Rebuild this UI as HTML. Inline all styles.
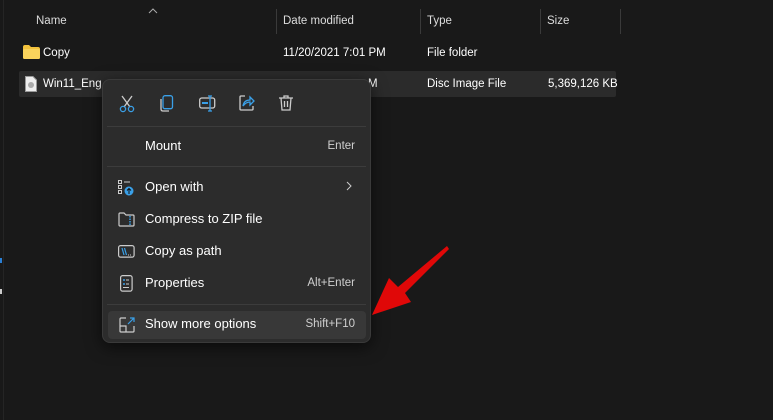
<!DOCTYPE html>
<html><head><meta charset="utf-8"><style>
*{margin:0;padding:0;box-sizing:border-box}
body{width:773px;height:420px;background:#191919;position:relative;overflow:hidden;font-family:"Segoe UI","Liberation Sans",sans-serif;color:#fff}
.t{position:absolute;font-size:11.5px;white-space:nowrap;transform:translateY(1px)}
.sep{position:absolute;top:9px;width:1px;height:25px;background:#3a3a3a}
.menu{position:absolute;left:102px;top:79px;width:269px;height:264px;background:#2c2c2c;border:1px solid #3a3a3a;border-radius:8px;box-shadow:0 4px 16px rgba(0,0,0,.6)}
.mi{position:absolute;left:42px;font-size:13px;color:#fff}
.sc{position:absolute;right:15px;font-size:11.5px;color:#d0d0d0}
.hl{position:absolute;height:1px;left:4px;right:4px;background:#3c3c3c}
svg{position:absolute;overflow:visible}
</style></head><body>
<div style="position:absolute;left:3px;top:0;width:1px;height:420px;background:#252525"></div>
<div style="position:absolute;left:0;top:258px;width:2px;height:5px;background:#2a7fd4"></div>
<div style="position:absolute;left:0;top:289px;width:2px;height:5px;background:#ccc"></div>
<div class="t" style="left:36px;top:14px;color:#ddd">Name</div>
<svg style="left:148px;top:8px" width="10" height="6"><path d="M1 5 L5 1 L9 5" stroke="#aaa" fill="none"/></svg>
<div class="sep" style="left:276px"></div>
<div class="t" style="left:283px;top:14px;color:#ddd">Date modified</div>
<div class="sep" style="left:420px"></div>
<div class="t" style="left:427px;top:14px;color:#ddd">Type</div>
<div class="sep" style="left:540px"></div>
<div class="t" style="left:547px;top:14px;color:#ddd">Size</div>
<div class="sep" style="left:620px"></div>
<svg style="left:23px;top:45px" width="17" height="14"><path d="M0 2 Q0 0 2 0 H6 L8 2 H15 Q17 2 17 4 V12 Q17 14 15 14 H2 Q0 14 0 12Z" fill="#f3c23c"/><rect x="0" y="4" width="17" height="10" rx="1.5" fill="#fad35c"/></svg>
<div class="t" style="left:43px;top:46px">Copy</div>
<div class="t" style="left:283px;top:46px">11/20/2021 7:01 PM</div>
<div class="t" style="left:427px;top:46px">File folder</div>
<div style="position:absolute;left:19px;top:71px;width:597px;height:26px;background:#2b2b2b;border-radius:2px"></div>
<svg style="left:25px;top:76px" width="12" height="16"><path d="M0.5 0.5 H8 L11.5 4 V15.5 H0.5Z" fill="#eee" stroke="#999"/><circle cx="6" cy="9" r="3" fill="#aaa"/></svg>
<div class="t" style="left:43px;top:77px">Win11_Eng</div>
<div class="t" style="left:368px;top:77px">M</div>
<div class="t" style="left:427px;top:77px">Disc Image File</div>
<div class="t" style="left:548px;top:77px">5,369,126 KB</div>
<div class="menu">
 <svg style="left:16px;top:15px" width="16" height="18"><path d="M3 1 L11 12 M13 1 L5 12" stroke="#ccc" stroke-width="1.3"/><circle cx="4" cy="14" r="2.6" stroke="#3aa0e8" fill="none" stroke-width="1.3"/><circle cx="12" cy="14" r="2.6" stroke="#3aa0e8" fill="none" stroke-width="1.3"/></svg>
 <svg style="left:57px;top:15px" width="14" height="17"><rect x="3" y="0.7" width="9.5" height="13" rx="2" stroke="#3aa0e8" fill="none" stroke-width="1.3"/><path d="M1 4 V14 Q1 16 3 16 H9" stroke="#ccc" fill="none" stroke-width="1.3"/></svg>
 <svg style="left:96px;top:15px" width="17" height="17"><rect x="0.7" y="3" width="15" height="10" rx="2" stroke="#ccc" fill="none" stroke-width="1.3"/><rect x="3" y="7" width="6" height="2" fill="#3aa0e8"/><path d="M11 1 V16 M9 1 H13 M9 16 H13" stroke="#3aa0e8" stroke-width="1.3"/></svg>
 <svg style="left:136px;top:15px" width="16" height="16"><path d="M6 1 H2 Q1 1 1 2 V14 Q1 15 2 15 H13 Q14 15 14 14 V11" stroke="#ccc" fill="none" stroke-width="1.3"/><path d="M4 11 Q5 5 11 5 V2 L15 6 L11 10 V7 Q7 7 4 11Z" stroke="#3aa0e8" fill="none" stroke-width="1.3"/></svg>
 <svg style="left:176px;top:15px" width="14" height="16"><path d="M0 3 H14 M5 3 V1 H9 V3 M2 3 L3 15 H11 L12 3 M5.5 6 V12 M8.5 6 V12" stroke="#ccc" fill="none" stroke-width="1.3"/></svg>
 <div class="hl" style="top:46px"></div>
 <div class="mi" style="top:58px">Mount</div><div class="sc" style="top:60px">Enter</div>
 <div class="hl" style="top:86px"></div>
 <svg style="left:15px;top:100px" width="16" height="16"><rect x="0.5" y="0.5" width="3" height="3" stroke="#ccc" fill="none"/><rect x="0.5" y="5.5" width="3" height="3" stroke="#ccc" fill="none"/><rect x="0.5" y="10.5" width="3" height="3" stroke="#ccc" fill="none"/><path d="M6 2 H12" stroke="#ccc"/><circle cx="11" cy="11" r="4.5" fill="#3aa0e8"/><path d="M11 14 V9 M9 10.5 L11 8.5 L13 10.5" stroke="#111" fill="none"/></svg>
 <div class="mi" style="top:99px">Open with</div>
 <svg style="left:243px;top:101px" width="6" height="10"><path d="M1 1 L5 5 L1 9" stroke="#ccc" fill="none"/></svg>
 <svg style="left:15px;top:132px" width="17" height="15"><path d="M1 2 Q1 1 2 1 H6 L8 3 H15 Q16 3 16 4 V13 Q16 14 15 14 H2 Q1 14 1 13Z" stroke="#ccc" fill="none" stroke-width="1.2"/><path d="M12 4 V13" stroke="#3aa0e8" stroke-width="1.5" stroke-dasharray="1.5 1"/></svg>
 <div class="mi" style="top:131px">Compress to ZIP file</div>
 <svg style="left:15px;top:165px" width="17" height="13"><rect x="0.6" y="0.6" width="15.5" height="11.5" rx="2" stroke="#ccc" fill="none" stroke-width="1.2"/><path d="M4 3 L6 10 M6.5 3 L8.5 10" stroke="#3aa0e8" stroke-width="1.2"/><path d="M10 10 H14" stroke="#ccc" stroke-dasharray="1 1"/></svg>
 <div class="mi" style="top:163px">Copy as path</div>
 <svg style="left:17px;top:195px" width="13" height="17"><rect x="0.6" y="0.6" width="11.5" height="15.5" rx="2" stroke="#ccc" fill="none" stroke-width="1.2"/><circle cx="4" cy="5" r="1" fill="#3aa0e8"/><circle cx="4" cy="9" r="1" fill="#3aa0e8"/><path d="M6 5 H9 M6 9 H9 M3 12.5 H9" stroke="#ccc"/></svg>
 <div class="mi" style="top:195px">Properties</div><div class="sc" style="top:197px">Alt+Enter</div>
 <div class="hl" style="top:224px"></div>
 <div style="position:absolute;left:5px;top:231px;width:258px;height:28px;background:#383838;border-radius:4px"></div>
 <svg style="left:16px;top:237px" width="16" height="16"><path d="M7 1 H2 Q1 1 1 2 V14 Q1 15 2 15 H14 Q15 15 15 14 V9 M1 9 H7 V15" stroke="#ccc" fill="none" stroke-width="1.2"/><path d="M9 7 L15 1 M11 1 H15 V5" stroke="#3aa0e8" fill="none" stroke-width="1.2"/></svg>
 <div class="mi" style="top:236px">Show more options</div><div class="sc" style="top:238px">Shift+F10</div>
</div>
<svg style="left:0;top:0" width="773" height="420"><path d="M447 246 L449 249 L405 293 L411 302 L372 315 L389 278 L398 287 Z" fill="#e00808"/></svg>
</body></html>
